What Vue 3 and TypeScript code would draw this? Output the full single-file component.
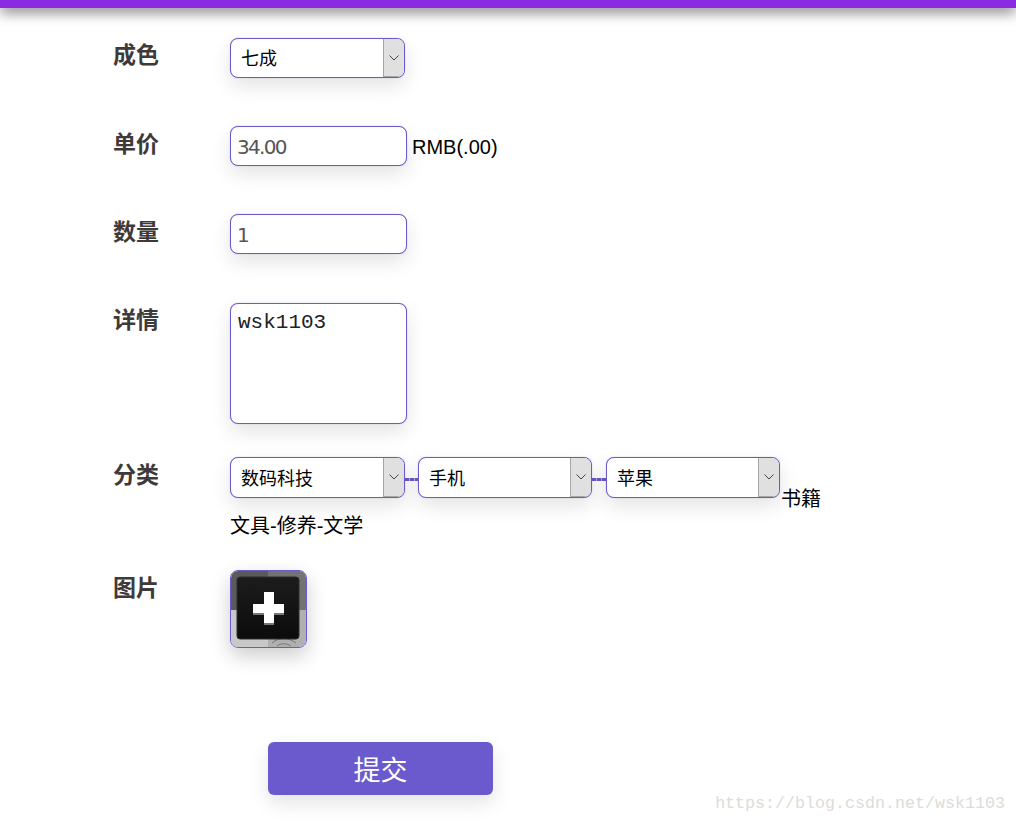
<script setup lang="ts">
import { ref } from 'vue'

const quality = ref('七成')
const price = ref('34.00')
const count = ref('1')
const detail = ref('wsk1103')
const categories = [
  { value: '数码科技' },
  { value: '手机' },
  { value: '苹果' },
]
</script>

<template>
  <div class="page">
    <header class="topbar"></header>
    <form class="form" @submit.prevent>
      <div class="row row-quality">
        <label class="label">成色</label>
        <div class="select">
          <select v-model="quality"><option>七成</option></select>
          <span class="arrow"><svg width="10" height="6" viewBox="0 0 10 6"><path d="M.5 .5 5 5 9.5 .5" fill="none" stroke="#444" stroke-width="1"/></svg></span>
        </div>
      </div>
      <div class="row row-price">
        <label class="label">单价</label>
        <input v-model="price" class="input" type="text" />
        <span class="unit">RMB(.00)</span>
      </div>
      <div class="row row-count">
        <label class="label">数量</label>
        <input v-model="count" class="input" type="text" />
      </div>
      <div class="row row-detail">
        <label class="label">详情</label>
        <textarea v-model="detail" class="textarea"></textarea>
      </div>
      <div class="row row-category">
        <label class="label">分类</label>
        <div class="category">
          <div class="category-line">
            <template v-for="(c, i) in categories" :key="c.value">
              <span v-if="i > 0" class="dash" :class="{ long: i === 2 }"></span>
              <div class="select tall" :class="{ wide: i === 0 }">
                <select><option>{{ c.value }}</option></select>
                <span class="arrow"><svg width="10" height="6" viewBox="0 0 10 6"><path d="M.5 .5 5 5 9.5 .5" fill="none" stroke="#444" stroke-width="1"/></svg></span>
              </div>
            </template>
            <span class="extra">书籍</span>
          </div>
          <div class="category-text">文具-修养-文学</div>
        </div>
      </div>
      <div class="row row-image">
        <label class="label">图片</label>
        <div class="thumb">
          <svg width="75" height="76" viewBox="1 1 75 76">
            <defs>
              <linearGradient id="blk" x1="0" y1="0" x2="0" y2="1">
                <stop offset="0" stop-color="#1c1c1c"/>
                <stop offset="1" stop-color="#0c0c0c"/>
              </linearGradient>
            </defs>
            <rect x="0" y="0" width="38" height="40" fill="#5a5a5a"/>
            <rect x="38" y="0" width="40" height="40" fill="#727272"/>
            <rect x="0" y="40" width="38" height="38" fill="#c8c8c8"/>
            <rect x="38" y="40" width="40" height="38" fill="#b0b0b0"/>
            <path d="M42 73c7-6 16-6 24 0M47 76c4-3 9-3 14 0M46 2c8 2 18 1 28 3" fill="none" stroke="#777" stroke-width="1"/>
            <rect x="7" y="7" width="62" height="62" rx="3" fill="url(#blk)" stroke="#2c2c2c" stroke-width="1"/>
            <path d="M34 23h10v11h10v10H44v10H34V44H23V34h11z" fill="#777" transform="translate(0 1)"/>
            <path d="M34 22h10v12h10v9H44v10H34V43H23v-9h11z" fill="#fff"/>
          </svg>
        </div>
      </div>
      <button class="submit" type="submit">提交</button>
    </form>
    <div class="watermark">https://blog.csdn.net/wsk1103</div>
  </div>
</template>

<style scoped>
.page {
  position: relative;
  height: 823px;
  overflow: hidden;
  background: #fff;
  font-family: "Liberation Sans", "Noto Sans CJK SC", sans-serif;
  font-size: 20px;
  color: #000;
}
.topbar {
  height: 8px;
  background: #8a2be2;
  box-shadow: 0 3px 14px rgba(0, 0, 0, 0.7);
}
.form {
  display: flex;
  flex-direction: column;
  padding: 30px 0 0 113px;
}
.row {
  display: flex;
  align-items: flex-start;
}
.row-quality { height: 88px; }
.row-price { height: 88px; }
.row-count { height: 89px; }
.row-detail { height: 154px; }
.row-category { height: 113px; }
.row-image { height: 172px; }
.label {
  width: 117px;
  flex: none;
  font-size: 23px;
  font-weight: 700;
  line-height: 36px;
  color: #3f3a3a;
}
.row-quality .label,
.row-detail .label {
  line-height: 34px;
}
.select {
  position: relative;
  width: 175px;
  height: 40px;
  box-sizing: border-box;
  border: 1px solid #6a5acd;
  border-radius: 8px;
  background: #fff;
  box-shadow: 0 0 1px rgba(106, 90, 205, 0.6), 0 8px 20px rgba(0, 0, 0, 0.11);
  overflow: hidden;
}
.select.tall {
  width: 174px;
  height: 41px;
}
.select.tall.wide {
  width: 175px;
}
.select select {
  appearance: none;
  display: block;
  width: 100%;
  height: 100%;
  border: 0;
  outline: 0;
  background: transparent;
  padding: 2px 0 0 10px;
  font: inherit;
  font-size: 18px;
  color: #000;
}
.arrow {
  position: absolute;
  top: 0;
  right: 0;
  bottom: 0;
  width: 20px;
  display: flex;
  align-items: center;
  justify-content: center;
  background: #e0e0e0;
  border-left: 1px solid #a6a6a6;
  border-bottom: 1px solid #a6a6a6;
  pointer-events: none;
}
.input,
.textarea {
  width: 177px;
  box-sizing: border-box;
  border: 1px solid #6a5acd;
  border-radius: 8px;
  background: #fff;
  box-shadow: 0 0 1px rgba(106, 90, 205, 0.6), 0 8px 20px rgba(0, 0, 0, 0.11);
  outline: 0;
  margin: 0;
}
.input {
  height: 40px;
  padding: 1px 6px 0 6px;
  font-family: "DejaVu Sans", sans-serif;
  font-size: 20px;
  letter-spacing: -1.7px;
  color: #555;
}
.unit {
  margin-left: 5px;
  line-height: 42px;
}
.textarea {
  display: block;
  height: 121px;
  padding: 6px 7px;
  resize: none;
  font-family: "Liberation Mono", monospace;
  font-size: 21px;
  line-height: 25px;
  color: #222;
}
.category {
  display: flex;
  flex-direction: column;
}
.category-line {
  display: flex;
  align-items: flex-start;
}
.dash {
  width: 13px;
  height: 3px;
  margin-top: 21px;
  background: repeating-linear-gradient(90deg, #6a5acd 0 4px, #b4ace6 4px 5px);
}
.dash.long {
  width: 14px;
}
.extra {
  margin: 29px 0 0 1px;
  line-height: 27px;
}
.category-text {
  line-height: 27px;
  margin-top: 0;
}
.thumb {
  width: 77px;
  height: 78px;
  box-sizing: border-box;
  border: 1px solid #6a5acd;
  border-radius: 8px;
  overflow: hidden;
  box-shadow: 0 8px 20px rgba(0, 0, 0, 0.2);
}
.thumb svg {
  display: block;
  filter: blur(0.4px);
}
.submit {
  width: 225px;
  height: 53px;
  margin-left: 155px;
  border: 0;
  border-radius: 6px;
  background: #6a5acd;
  color: #fff;
  font: inherit;
  font-size: 27px;
  box-shadow: 0 8px 20px rgba(0, 0, 0, 0.11);
}
.watermark {
  position: absolute;
  right: 11px;
  bottom: 9px;
  font-family: "Liberation Mono", monospace;
  font-size: 16.67px;
  line-height: 20px;
  color: #dcdcd8;
}
</style>
